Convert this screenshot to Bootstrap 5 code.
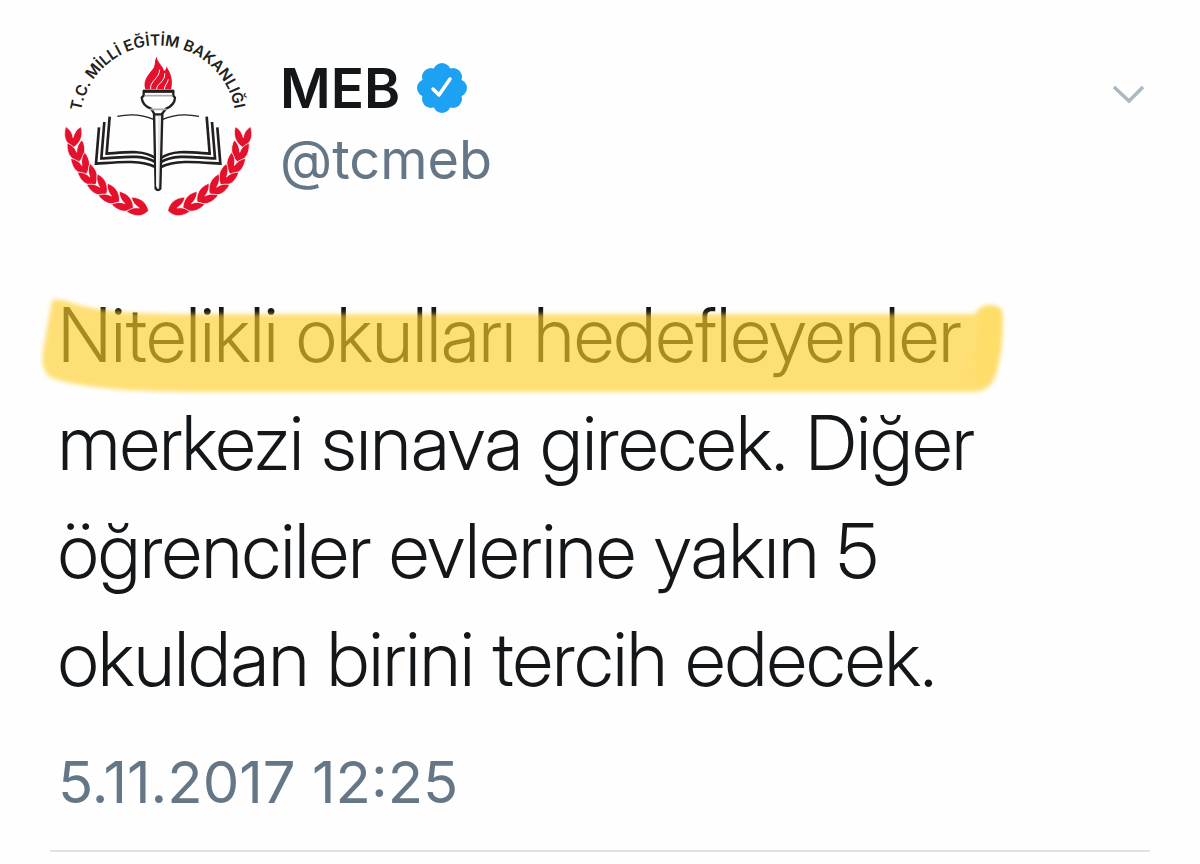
<!DOCTYPE html>
<html lang="tr">
<head>
<meta charset="utf-8">
<meta name="viewport" content="width=device-width, initial-scale=1">
<title>MEB (@tcmeb)</title>
<link href="https://cdn.jsdelivr.net/npm/bootstrap@5.3.0/dist/css/bootstrap.min.css" rel="stylesheet">
<style>
  body { font-family: Inter, "Liberation Sans", sans-serif; color: #14171a; background: #fefefe; }
  .tweet { padding: 20px 50px 10px; }
  .emblem { width: 220px; height: 210px; }
  .author { padding: 32px 0 0 10px; }
  .display-name { font-size: 55px; line-height: 72px; font-weight: 600; }
  .handle { font-size: 54px; line-height: 72px; color: #657786; }
  .verified { width: 52px; height: 52px; }
  .more { margin: 60px 4px 0 0; width: 36px; height: 28px; }
  .message { font-family: "Inter Display", "Inter Tight", Inter, sans-serif; font-size: 75px; line-height: 108px; font-weight: 300; padding: 51px 0 0 8px; }
  .marker { left: -18px; top: 10px; width: 968px; height: 104px; pointer-events: none; }
  .stamp { font-size: 58px; line-height: 80px; color: #657786; padding: 29px 0 0 8px; }
  .rule { border-top: 2px solid #dfe4e6; opacity: 1; margin: 28px 0 0; }
</style>
</head>
<body>
<main>
<article class="tweet">
  <header class="d-flex align-items-start">
    <svg class="emblem flex-shrink-0" viewBox="0 0 660 630" role="img" aria-label="T.C. Millî Eğitim Bakanlığı">
      <defs>
        <path id="arc" d="M93 274A234 234 0 0 1 558 302"/>
        <path id="leaf" d="M0 33C-15 25-33 10-21-30C-9-22-1-10 0 4C4-10 12-22 25-28C33 4 17 24 0 33Z"/>
        <g id="branch" fill="#e4112c" stroke="#fff" stroke-width="2">
          <use href="#leaf" transform="translate(69 349) rotate(-2)"/>
          <use href="#leaf" transform="translate(79 393) rotate(-14)"/>
          <use href="#leaf" transform="translate(94 433) rotate(-26)"/>
          <use href="#leaf" transform="translate(117 468) rotate(-37)"/>
          <use href="#leaf" transform="translate(146 499) rotate(-47)"/>
          <use href="#leaf" transform="translate(181 526) rotate(-55)"/>
          <use href="#leaf" transform="translate(221 549) rotate(-62)"/>
          <use href="#leaf" transform="translate(264 563) rotate(-74)"/>
        </g>
        <g id="pages" fill="none" stroke="#231f20" stroke-width="8">
          <path d="M202 289C240 281 282 285 313 299" stroke-width="4"/>
          <path d="M179 290L170 401C225 397 280 388 316 414"/>
          <path d="M163 306L154 415C215 413 272 401 316 426"/>
          <path d="M147 322L138 431C200 427 270 418 316 441"/>
        </g>
      </defs>
      <text font-family="Inter, sans-serif" font-size="46" font-weight="600" fill="#231f20"><textPath href="#arc">T.C. MİLLİ EĞİTİM BAKANLIĞI</textPath></text>
      <use href="#branch"/>
      <use href="#branch" transform="translate(649 0) scale(-1 1)"/>
      <use href="#pages"/>
      <use href="#pages" transform="translate(649 0) scale(-1 1)"/>
      <path d="M286 208C276 178 300 160 311 143C317 132 313 120 320 110C322 128 340 138 342 153C348 150 349 145 349 139C361 158 371 180 363 208Z" fill="#e4112c"/>
      <path d="M302 207C298 184 328 176 329 149M320 208C319 192 347 184 344 160M343 208C343 198 353 190 355 178" fill="none" stroke="#fff" stroke-width="3"/>
      <g stroke="#231f20" stroke-width="7" stroke-linejoin="round">
        <path d="M312 281L317 506Q324 514 331 506L337 281Z" fill="#e6e6e6"/>
        <path d="M281 213H370V227L375 233C374 253 361 261 348 266L335 283H314L303 266C289 261 277 253 275 233L281 227Z" fill="#fff"/>
        <path d="M279 214H372" stroke-width="9"/>
        <path d="M284 227H367M300 268H350" stroke="#aaa" stroke-width="5"/>
      </g>
      <path d="M321 290V500" stroke="#fff" stroke-width="5"/>
    </svg>
    <div class="author flex-grow-1">
      <div class="d-flex align-items-center gap-3">
        <span class="display-name">MEB</span>
        <svg class="verified" viewBox="0 0 52 52" role="img" aria-label="Onaylanmış hesap">
          <g fill="#1da1f2"><circle cx="26" cy="26" r="20"/><circle cx="26" cy="10" r="9"/><circle cx="37" cy="15" r="9"/><circle cx="42" cy="26" r="9"/><circle cx="37" cy="37" r="9"/><circle cx="26" cy="42" r="9"/><circle cx="15" cy="37" r="9"/><circle cx="10" cy="26" r="9"/><circle cx="15" cy="15" r="9"/></g>
          <path d="M17 27L23 33L34 17" fill="none" stroke="#fff" stroke-width="3.5" stroke-linecap="round" stroke-linejoin="round"/>
        </svg>
      </div>
      <a class="handle d-block text-decoration-none" href="#">@tcmeb</a>
    </div>
    <button class="more btn p-0 border-0 d-flex" type="button" aria-label="Diğer seçenekler">
      <svg width="36" height="28" viewBox="0 0 36 28"><path d="M4 7L19 21L33 7" fill="none" stroke="#aab8c2" stroke-width="3.5"/></svg>
    </button>
  </header>
  <p class="message m-0"><span class="position-relative d-inline-block">Nitelikli okulları hedefleyenler<svg class="marker position-absolute" viewBox="0 0 968 104" aria-hidden="true">
      <defs><filter id="soft" x="-5%" y="-15%" width="110%" height="130%"><feGaussianBlur stdDeviation="2"/></filter></defs>
      <g fill="#fece28" filter="url(#soft)">
        <path fill-opacity=".63" d="M12 9Q22 7 32 12Q60 22 130 23H935Q939 14 949 14Q964 13 963 28Q963 62 956 84Q950 101 932 101H165C95 101 50 98 14 88Q0 83 3 60Z"/>
        <path fill-opacity=".2" d="M941 19Q949 12 958 17Q964 25 961 42Q960 70 952 86Q946 95 938 94Q931 80 936 55Z"/>
      </g>
    </svg></span><br>merkezi sınava girecek. Diğer<br>öğrenciler evlerine yakın 5<br>okuldan birini tercih edecek.</p>
  <div class="stamp"><time datetime="2017-11-05T12:25">5.11.2017 12:25</time></div>
  <hr class="rule">
</article>
</main>
<script src="https://cdn.jsdelivr.net/npm/bootstrap@5.3.0/dist/js/bootstrap.bundle.min.js"></script>
</body>
</html>
